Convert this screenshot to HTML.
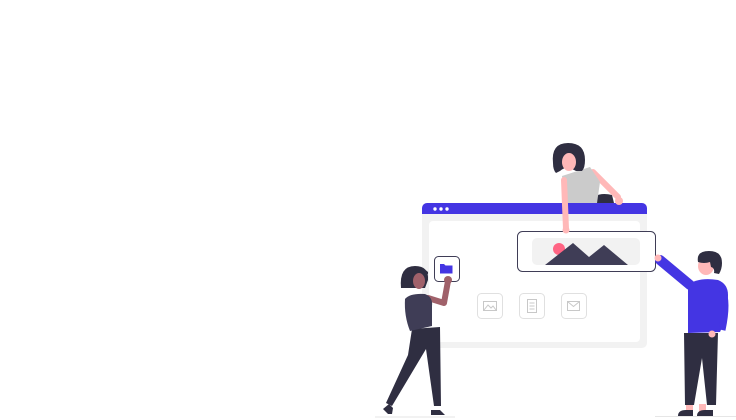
<!DOCTYPE html>
<html><head><meta charset="utf-8"><style>
html,body{margin:0;padding:0;background:#fff;width:736px;height:420px;overflow:hidden}
svg{display:block}
</style></head><body>
<svg width="736" height="420" viewBox="0 0 736 420" xmlns="http://www.w3.org/2000/svg">
<rect x="422" y="203" width="225" height="145" rx="5" fill="#f2f2f2"/>
<path d="M427 203 H642 a5 5 0 0 1 5 5 V214 H422 V208 a5 5 0 0 1 5 -5z" fill="#4435e3"/>
<circle cx="435" cy="209" r="1.7" fill="#fff"/><circle cx="441" cy="209" r="1.7" fill="#fff"/><circle cx="447" cy="209" r="1.7" fill="#fff"/>
<rect x="429" y="221" width="211" height="121" rx="4" fill="#fff"/>
<g fill="#fff" stroke="#e0e0e0" stroke-width="1">
<rect x="477.5" y="293.5" width="25" height="25" rx="4"/>
<rect x="519.5" y="293.5" width="25" height="25" rx="4"/>
<rect x="561.5" y="293.5" width="25" height="25" rx="4"/>
</g>
<g fill="none" stroke="#c8c8c8" stroke-width="1">
<rect x="483.5" y="301.5" width="13" height="9"/>
<path d="M484 310 l4 -5 3 3 2 -2 3 4"/>
<rect x="527.5" y="299.5" width="9" height="13"/>
<path d="M529.5 303h5M529.5 306h5M529.5 309h5"/>
<rect x="567.5" y="301.5" width="12" height="9"/>
<path d="M567.5 301.5 l6 5 6 -5"/>
</g>
<rect x="434.5" y="256.5" width="25" height="25" rx="4" fill="#fff" stroke="#3f3d56" stroke-width="1"/>
<path d="M440 264 h4 l1.5 1.5 h7 v8 h-12.5z" fill="#4435e3"/>
<rect x="517.5" y="231.5" width="138" height="40" rx="5" fill="#fff" stroke="#3f3d56" stroke-width="1"/>
<rect x="532" y="238" width="108" height="27" rx="5" fill="#f2f2f2"/>
<circle cx="559" cy="249" r="6" fill="#ff6584"/>
<path d="M545 265 L573 243 L589 257 L604 245 L628 265z" fill="#3f3d56"/>
<!-- top woman -->
<path d="M586 203 q10 -12 26 -8 l2 8z" fill="#2f2e41"/>
<path d="M593 172 L618 197" stroke="#ffb8b8" stroke-width="6" stroke-linecap="round"/>
<circle cx="619" cy="201" r="4" fill="#ffb8b8"/>
<path d="M562 176 L590 167 L600 182 L597 203 L566 203z" fill="#cbcbcb"/>
<path d="M564 180 L566 229" stroke="#ffb8b8" stroke-width="6" stroke-linecap="round"/>
<circle cx="566" cy="230" r="3.5" fill="#ffb8b8"/>
<path d="M553 163 q-2 -20 15 -20 q17 0 17 17 q0 8 -3 11 l-6 0 q-10 -6 -16 0 l-4 2 q-3 -3 -3 -10z" fill="#2f2e41"/>
<ellipse cx="569" cy="162" rx="7" ry="9" fill="#ffb8b8"/>
<path d="M559 154 q9 -4 22 0 l0 -6 q-12 -6 -22 6z" fill="#2f2e41"/>
<!-- left woman -->
<line x1="375" y1="417" x2="455" y2="417" stroke="#e6e6e6" stroke-width="1"/>
<path d="M412 329 L440 327 L441 406 L434 406 L426 349 L392 406 L386 403 L408 355z" fill="#2f2e41"/>
<path d="M383 409 l6 -5 4 4 -1 6 -4 0z" fill="#2f2e41"/>
<path d="M431 410 h9 l5 5 h-14z" fill="#2f2e41"/>
<path d="M428 298 L444 303 L448 281" stroke="#a0616a" stroke-width="6" fill="none" stroke-linecap="round" stroke-linejoin="round"/>
<circle cx="448" cy="280" r="4" fill="#a0616a"/>
<path d="M405 299 q5 -6 20 -5 q8 3 7 12 l0 20 l-22 5 q-6 -15 -5 -32z" fill="#3f3d56"/>
<path d="M401 288 q-2 -22 14 -22 q14 0 13 14 l-3 8 h-14 z" fill="#2f2e41"/>
<ellipse cx="419" cy="281" rx="6" ry="8" fill="#a0616a"/>
<path d="M410 278 q6 -8 18 -4 l0 -2 q-8 -8 -18 6z" fill="#2f2e41"/>
<!-- man -->
<line x1="655" y1="416.5" x2="736" y2="416.5" stroke="#e6e6e6" stroke-width="1"/>
<path d="M660 260 L690 285" stroke="#4435e3" stroke-width="10" stroke-linecap="round"/>
<circle cx="658" cy="258" r="3.5" fill="#ffb8b8"/>
<path d="M686 412 h7 v-8 h-7z M699 412 h7 v-8 h-7z" fill="#ffb8b8"/>
<path d="M684 333 L718 333 L716 405 L707 405 L702 358 L694 405 L685 405z" fill="#2f2e41"/>
<path d="M678 416 q0 -6 8 -6 h7 v6z M697 416 q0 -6 8 -6 h8 v6z" fill="#2f2e41"/>
<path d="M688 285 q10 -8 30 -5 q10 4 10 15 q0 20 -8 37 l-32 1z" fill="#4435e3"/>
<path d="M722 290 q6 12 0 40" stroke="#4435e3" stroke-width="7" fill="none"/>
<circle cx="712" cy="334" r="3.5" fill="#ffb8b8"/>
<ellipse cx="706" cy="266" rx="8" ry="9" fill="#ffb8b8"/>
<path d="M698 262 q-2 -11 11 -11 q13 0 13 12 q0 6 -3 11 l-5 -1 q1 -5 -3 -6 l-1 -5 q-6 2 -12 0z" fill="#2f2e41"/>
</svg>
</body></html>
